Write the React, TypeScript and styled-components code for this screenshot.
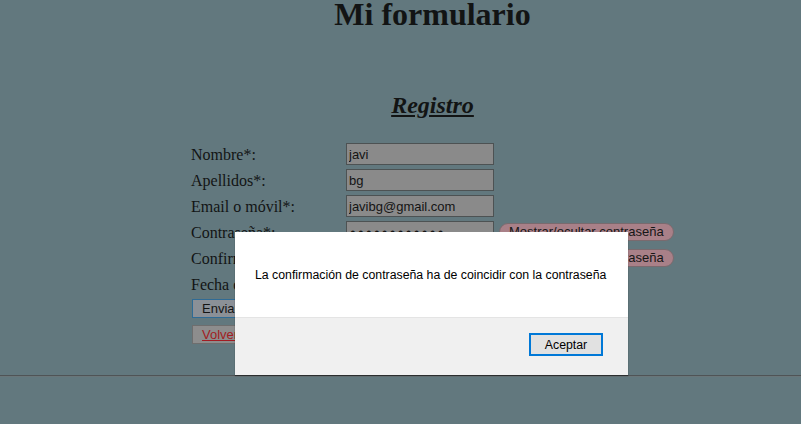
import React from "react";
import styled, { createGlobalStyle } from "styled-components";

const Global = createGlobalStyle`
  html, body { margin: 0; padding: 0; }
  body {
    background: #62787e;
    font-family: "Liberation Serif", "Times New Roman", serif;
    color: #121414;
    width: 801px;
    height: 424px;
    overflow: hidden;
    position: relative;
  }
`;

const Page = styled.div`
  display: flex;
  flex-direction: column;
  padding-left: 64px;
`;

const Title = styled.h1`
  margin: 0;
  font-size: 32px;
  line-height: 28px;
  font-weight: bold;
  text-align: center;
`;

const Subtitle = styled.h2`
  margin: 63px 0 0;
  font-size: 24px;
  line-height: 28px;
  font-weight: bold;
  font-style: italic;
  text-decoration: underline;
  text-align: center;
`;

const Form = styled.form`
  margin: 22px 0 0 127px;
  display: grid;
  grid-template-columns: 155px auto;
  grid-auto-rows: 26px;
  align-items: center;
`;

const Label = styled.label`
  font-size: 16px;
  line-height: 26px;
  padding-top: 1px;
  white-space: nowrap;
`;

const Field = styled.div`
  display: flex;
  align-items: center;
  gap: 5px;
`;

const Input = styled.input`
  box-sizing: border-box;
  width: 148px;
  height: 22px;
  margin: 0;
  padding: 1px 2px;
  background: #8a8a8a;
  border: 1px solid #4d5253;
  font-family: "Liberation Sans", Arial, sans-serif;
  font-size: 13px;
  color: #141414;
  outline: none;

  &[type="password"] {
    font-family: "DejaVu Sans", sans-serif;
    font-size: 13px;
    letter-spacing: 0.3px;
  }
`;

const PillButton = styled.button`
  box-sizing: border-box;
  height: 18px;
  padding: 0 9px;
  margin: 0;
  border: 1px solid #7a6a6e;
  border-radius: 9px;
  background: #a98088;
  font-family: "Liberation Sans", Arial, sans-serif;
  font-size: 13px;
  line-height: 16px;
  color: #161616;
  white-space: nowrap;
`;

const Actions = styled.div`
  margin: 2px 0 0 128px;
  display: flex;
  flex-direction: column;
  align-items: flex-start;
  gap: 7px;
`;

const ActionButton = styled.button<{ $primary?: boolean }>`
  box-sizing: border-box;
  height: 19px;
  margin: 0;
  padding: 0 9px;
  border: 1px solid ${(p) => (p.$primary ? "#2f6b95" : "#6e6e6e")};
  background: ${(p) => (p.$primary ? "#8b9097" : "#8d8d8d")};
  font-family: "Liberation Sans", Arial, sans-serif;
  font-size: 13px;
  line-height: 17px;
  color: #141414;
`;

const BackLink = styled.a`
  color: #a21c22;
  text-decoration: underline;
`;

const Rule = styled.hr`
  margin: 31px 0 0 -64px;
  border: none;
  border-top: 1px solid #4f5456;
  border-bottom: 1px solid #6a7679;
  height: 0;
`;

const Dialog = styled.div`
  position: absolute;
  left: 235px;
  top: 232px;
  width: 393px;
  height: 143px;
  display: flex;
  flex-direction: column;
  background: #ffffff;
  box-shadow: 0 1px 1px rgba(0, 0, 0, 0.45);
  font-family: "Liberation Sans", Arial, sans-serif;
`;

const DialogBody = styled.div`
  height: 85px;
  box-sizing: border-box;
  padding: 36px 0 0 20px;
  font-size: 12.3px;
  line-height: 14px;
  color: #000;
  white-space: nowrap;
`;

const DialogFooter = styled.div`
  flex: 1;
  display: flex;
  justify-content: flex-end;
  align-items: flex-start;
  padding: 15px 25px 0 0;
  background: #f0f0f0;
  border-top: 1px solid #e4e4e4;
`;

const OkButton = styled.button`
  box-sizing: border-box;
  width: 74px;
  height: 23px;
  margin: 0;
  padding: 0;
  border: 2px solid #0078d7;
  background: #e1e1e1;
  font-family: "Liberation Sans", Arial, sans-serif;
  font-size: 12.3px;
  color: #000;
`;

const rows: { label: string; value: string; type?: string; toggle?: boolean }[] = [
  { label: "Nombre*:", value: "javi" },
  { label: "Apellidos*:", value: "bg" },
  { label: "Email o móvil*:", value: "javibg@gmail.com" },
  { label: "Contraseña*:", value: "javibg123456", type: "password", toggle: true },
  { label: "Confirmar contraseña*:", value: "javibg12345", type: "password", toggle: true },
  { label: "Fecha de nacimiento:", value: "", type: "date" },
];

export default function App() {
  return (
    <>
      <Global />
      <Page>
        <Title>Mi formulario</Title>
        <Subtitle>Registro</Subtitle>
        <Form onSubmit={(e) => e.preventDefault()}>
          {rows.map((r) => (
            <React.Fragment key={r.label}>
              <Label>{r.label}</Label>
              <Field>
                <Input type={r.type ?? "text"} defaultValue={r.value} readOnly />
                {r.toggle && <PillButton type="button">Mostrar/ocultar contraseña</PillButton>}
              </Field>
            </React.Fragment>
          ))}
        </Form>
        <Actions>
          <ActionButton $primary>Enviar</ActionButton>
          <ActionButton>
            <BackLink>Volver</BackLink>
          </ActionButton>
        </Actions>
        <Rule />
      </Page>
      <Dialog>
        <DialogBody>La confirmación de contraseña ha de coincidir con la contraseña</DialogBody>
        <DialogFooter>
          <OkButton>Aceptar</OkButton>
        </DialogFooter>
      </Dialog>
    </>
  );
}
